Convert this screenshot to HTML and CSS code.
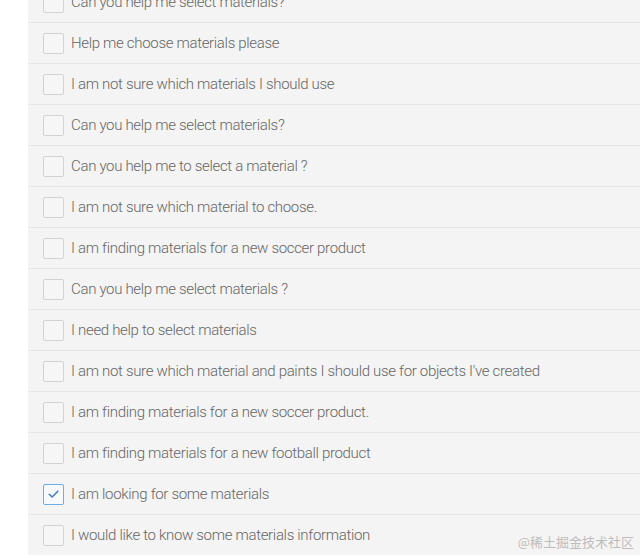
FILE: index.html
```html
<!DOCTYPE html>
<html>
<head>
<meta charset="utf-8">
<link rel="stylesheet" href="styles.css">
</head>
<body>
<div class="panel">
  <label class="row"><span class="box"></span><span class="txt">Can you help me select materials?</span></label>
  <label class="row"><span class="box"></span><span class="txt">Help me choose materials please</span></label>
  <label class="row"><span class="box"></span><span class="txt">I am not sure which materials I should use</span></label>
  <label class="row"><span class="box"></span><span class="txt">Can you help me select materials?</span></label>
  <label class="row"><span class="box"></span><span class="txt">Can you help me to select a material ?</span></label>
  <label class="row"><span class="box"></span><span class="txt">I am not sure which material to choose.</span></label>
  <label class="row"><span class="box"></span><span class="txt">I am finding materials for a new soccer product</span></label>
  <label class="row"><span class="box"></span><span class="txt">Can you help me select materials ?</span></label>
  <label class="row"><span class="box"></span><span class="txt">I need help to select materials</span></label>
  <label class="row"><span class="box"></span><span class="txt">I am not sure which material and paints I should use for objects I've created</span></label>
  <label class="row"><span class="box"></span><span class="txt">I am finding materials for a new soccer product.</span></label>
  <label class="row"><span class="box"></span><span class="txt">I am finding materials for a new football product</span></label>
  <label class="row"><span class="box checked"><svg viewBox="0 0 20 20" width="20" height="20"><path d="M5.5 10.2 L8.6 13.2 L14.5 7" fill="none" stroke="#3d7fc4" stroke-width="1.6" stroke-linecap="round" stroke-linejoin="round"/></svg></span><span class="txt">I am looking for some materials</span></label>
  <label class="row last"><span class="box"></span><span class="txt">I would like to know some materials information</span></label>
</div>
<div class="mark">@稀土掘金技术社区</div>
</body>
</html>
```
FILE: styles.css
```css
html, body {
  margin: 0;
  padding: 0;
  background: #ffffff;
  overflow: hidden;
}
body {
  font-family: Roboto, "Liberation Sans", sans-serif;
}
.panel {
  margin-left: 28px;
  margin-top: -18px;
  background: #f4f4f4;
  display: flex;
  flex-direction: column;
}
.row {
  display: flex;
  align-items: center;
  height: 40px;
  border-bottom: 1px solid #e6e6e6;
  padding-left: 15px;
}
.row.last {
  border-bottom: none;
  height: 40px;
}
.box {
  box-sizing: border-box;
  width: 21px;
  height: 21px;
  border: 1px solid #d2d2d2;
  border-radius: 2px;
  background: #f6f6f6;
  flex: none;
  display: flex;
  align-items: center;
  justify-content: center;
}
.box.checked {
  border-color: #6aaee6;
  background: #f8f9fb;
}
.txt {
  margin-left: 7px;
  font-size: 15px;
  font-weight: 300;
  letter-spacing: -0.32px;
  color: #666666;
  white-space: nowrap;
}
.mark {
  position: absolute;
  right: 6px;
  top: 532px;
  font-family: "Noto Sans CJK SC", sans-serif;
  font-size: 13px;
  color: #bcbcbc;
}
```
